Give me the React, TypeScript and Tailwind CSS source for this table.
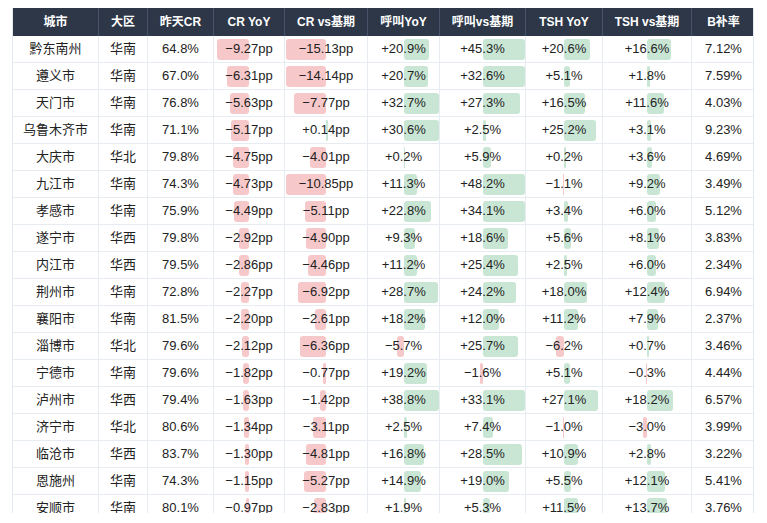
import React from "react";

type Row = [string, string, string, number, number, number, number, number, number, string];

const rows: Row[] = [
  ["黔东南州", "华南", "64.8%", -9.27, -15.13, 20.9, 45.3, 20.6, 16.6, "7.12%"],
  ["遵义市", "华南", "67.0%", -6.31, -14.14, 20.7, 32.6, 5.1, 1.8, "7.59%"],
  ["天门市", "华南", "76.8%", -5.63, -7.77, 32.7, 27.3, 16.5, 11.6, "4.03%"],
  ["乌鲁木齐市", "华南", "71.1%", -5.17, 0.14, 30.6, 2.5, 25.2, 3.1, "9.23%"],
  ["大庆市", "华北", "79.8%", -4.75, -4.01, 0.2, 5.9, 0.2, 3.6, "4.69%"],
  ["九江市", "华南", "74.3%", -4.73, -10.85, 11.3, 48.2, -1.1, 9.2, "3.49%"],
  ["孝感市", "华南", "75.9%", -4.49, -5.11, 22.8, 34.1, 3.4, 6.0, "5.12%"],
  ["遂宁市", "华西", "79.8%", -2.92, -4.9, 9.3, 18.6, 5.6, 8.1, "3.83%"],
  ["内江市", "华西", "79.5%", -2.86, -4.46, 11.2, 25.4, 2.5, 6.0, "2.34%"],
  ["荆州市", "华南", "72.8%", -2.27, -6.92, 28.7, 24.2, 18.0, 12.4, "6.94%"],
  ["襄阳市", "华南", "81.5%", -2.2, -2.61, 18.2, 12.0, 11.2, 7.9, "2.37%"],
  ["淄博市", "华北", "79.6%", -2.12, -6.36, -5.7, 25.7, -6.2, 0.7, "3.46%"],
  ["宁德市", "华南", "79.6%", -1.82, -0.77, 19.2, -1.6, 5.1, -0.3, "4.44%"],
  ["泸州市", "华西", "79.4%", -1.63, -1.42, 38.8, 33.1, 27.1, 18.2, "6.57%"],
  ["济宁市", "华北", "80.6%", -1.34, -3.11, 2.5, 7.4, -1.0, -3.0, "3.99%"],
  ["临沧市", "华西", "83.7%", -1.3, -4.81, 16.8, 28.5, 10.9, 2.8, "3.22%"],
  ["恩施州", "华南", "74.3%", -1.15, -5.27, 14.9, 19.0, 5.5, 12.1, "5.41%"],
  ["安顺市", "华南", "80.1%", -0.97, -2.83, 1.9, 5.3, 11.5, 13.7, "3.76%"],
];

const headers = ["城市", "大区", "昨天CR", "CR YoY", "CR vs基期", "呼叫YoY", "呼叫vs基期", "TSH YoY", "TSH vs基期", "B补率"];
const widths = ["w-[86px]", "w-[49px]", "w-[66px]", "w-[71px]", "w-[83px]", "w-[72px]", "w-[86px]", "w-[77px]", "w-[89px]", "w-[63px]"];
const px = [86, 49, 66, 71, 83, 72, 86, 77, 89, 63];

// px per unit for the bar columns (index 3..8)
const scale: Record<number, number> = { 3: 3.45, 4: 4.1, 5: 1.2, 6: 1.39, 7: 1.26, 8: 1.45 };

function fmt(v: number, pp: boolean) {
  const s = Math.abs(v).toFixed(pp ? 2 : 1) + (pp ? "pp" : "%");
  return (v < 0 ? "\u2212" : "+") + s;
}

function BarCell({ v, col }: { v: number; col: number }) {
  const half = px[col] / 2 - 1;
  const w = Math.max(1.5, Math.min(half, Math.abs(v) * scale[col]));
  const pp = col < 5;
  return (
    <div className={`${widths[col]} relative flex h-full shrink-0 items-center justify-center border-r border-[#e6ecf2]`}>
      {v < 0 ? (
        <div className="absolute top-[3px] right-1/2 h-[21px] rounded-[3px] bg-[#f7c8c9]" style={{ width: w }} />
      ) : (
        <div className="absolute top-[3px] left-1/2 h-[21px] rounded-[3px] bg-[#c9e6d5]" style={{ width: w }} />
      )}
      <span className="relative">{fmt(v, pp)}</span>
    </div>
  );
}

export default function App() {
  return (
    <div className="h-[523px] bg-white px-3 pt-2 font-['Liberation_Sans','Noto_Sans_CJK_SC',sans-serif]">
      <div className="h-[505px] w-[742px] overflow-hidden border-x border-[#e2e8f0]">
        <div className="flex h-[28px] bg-[#2d3748] text-[12px] font-bold text-white">
          {headers.map((h, i) => (
            <div key={h} className={`${widths[i]} flex shrink-0 items-center justify-center border-r border-[#46536a] last:border-r-0`}>
              {h}
            </div>
          ))}
        </div>
        {rows.map((r) => (
          <div key={r[0]} className="flex h-[27px] border-b border-[#e6ecf2] text-[13px] text-[#222]">
            <div className={`${widths[0]} flex shrink-0 items-center justify-center border-r border-[#e6ecf2]`}>{r[0]}</div>
            <div className={`${widths[1]} flex shrink-0 items-center justify-center border-r border-[#e6ecf2]`}>{r[1]}</div>
            <div className={`${widths[2]} flex shrink-0 items-center justify-center border-r border-[#e6ecf2]`}>{r[2]}</div>
            {[3, 4, 5, 6, 7, 8].map((c) => (
              <BarCell key={c} v={r[c] as number} col={c} />
            ))}
            <div className={`${widths[9]} flex shrink-0 items-center justify-center`}>{r[9]}</div>
          </div>
        ))}
      </div>
    </div>
  );
}
